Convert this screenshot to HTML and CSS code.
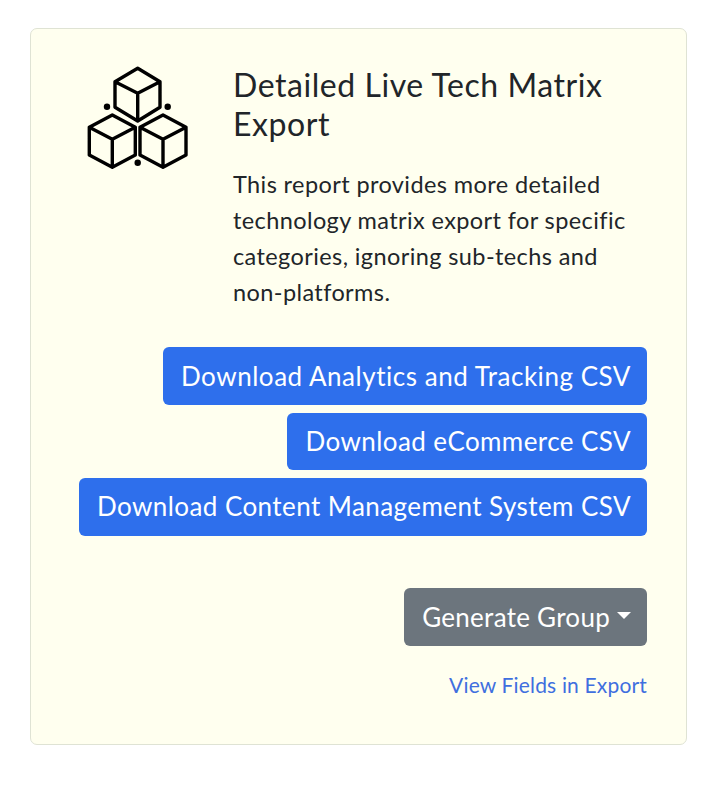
FILE: index.html
```html
<!DOCTYPE html>
<html lang="en">

<head>
  <meta charset="UTF-8">
  <title>Detailed Live Tech Matrix Export</title>
  <link rel="stylesheet" href="styles.css">
</head>

<body>
  <div class="card">
    <div class="intro">
      <div class="icon-col">
        <svg class="cubes" viewBox="0 0 104 104" fill="none" stroke="#000" stroke-width="3.4" stroke-linejoin="round">
          <path d="M51.7 2.3 74 15.7V41.3L51.7 55 29 41.3V15.7Z M29 15.7 51.7 27.3 74 15.7 M51.7 27.3V55" />
          <path d="M26.3 49 49.3 61.3V89L26.3 101.3 3.3 89V61.3Z M3.3 61.3 26.3 73.3 49.3 61.3 M26.3 73.3V101.3" />
          <path d="M77 49 100 61.3V89L77 101.3 54 89V61.3Z M54 61.3 77 73.3 100 61.3 M77 73.3V101.3" />
          <circle cx="21" cy="40.7" r="3.2" fill="#000" stroke="none" />
          <circle cx="81.7" cy="40.7" r="3.2" fill="#000" stroke="none" />
          <circle cx="51.7" cy="96.7" r="3.2" fill="#000" stroke="none" />
        </svg>
      </div>
      <div class="text-col">
        <h3>Detailed Live Tech Matrix Export</h3>
        <p>This report provides more detailed technology matrix export for specific categories, ignoring sub-techs and non-platforms.</p>
      </div>
    </div>

    <div class="actions">
      <a class="btn btn-primary btn-first" href="#">Download Analytics and Tracking CSV</a>
      <a class="btn btn-primary btn-short" href="#">Download eCommerce CSV</a>
      <a class="btn btn-primary btn-long" href="#">Download Content Management System CSV</a>
    </div>

    <div class="group">
      <button class="btn btn-secondary dropdown-toggle">Generate Group</button>
    </div>

    <a class="fields-link" href="#">View Fields in Export</a>
  </div>
</body>

</html>
```

FILE: styles.css
```css
body {
  margin: 0;
  padding: 28px 31px 48px 30px;
  background-color: #fff;
  font-family: Lato, "Open Sans", sans-serif;
  color: #212529;
}

.card {
  box-sizing: border-box;
  height: 717px;
  padding: 36px 39px 0 49px;
  background-color: #ffffef;
  border: 1px solid #dfe3d4;
  border-radius: 7px;
  text-align: right;
}

.intro {
  display: flex;
  text-align: left;
}

.icon-col {
  width: 153px;
  flex-shrink: 0;
  padding-top: 1px;
  padding-left: 6px;
  box-sizing: border-box;
}

.cubes {
  display: block;
  width: 104px;
  height: 104px;
}

h3 {
  margin: 0 0 23px;
  font-size: 32px;
  font-weight: 400;
  line-height: 39px;
  letter-spacing: 0.55px;
}

p {
  margin: 0;
  font-size: 23.5px;
  line-height: 36px;
  letter-spacing: 0.4px;
}

.actions {
  display: flex;
  flex-direction: column;
  align-items: flex-end;
  gap: 8px;
  margin-top: 37px;
}

.btn {
  display: inline-block;
  box-sizing: border-box;
  height: 58px;
  padding: 0 15px 0 17px;
  font-family: inherit;
  font-size: 26px;
  line-height: 55px;
  letter-spacing: 0.5px;
  white-space: nowrap;
  color: #fff;
  text-decoration: none;
  border-radius: 6px;
  border: 1px solid transparent;
}

.btn-first {
  line-height: 56px;
  letter-spacing: 0.53px;
}

.btn-short {
  height: 57px;
  line-height: 54px;
  letter-spacing: 0.42px;
}

.btn-long {
  letter-spacing: 0.43px;
}

.btn-primary {
  background-color: #2e6fec;
}

.btn-secondary {
  background-color: #6c757d;
  letter-spacing: 0.27px;
}

.group {
  margin-top: 52px;
}

.dropdown-toggle::after {
  content: "";
  display: inline-block;
  margin-left: 7px;
  vertical-align: 8px;
  border-top: 7px solid #fff;
  border-left: 7px solid transparent;
  border-right: 7px solid transparent;
}

.fields-link {
  display: block;
  margin-top: 22px;
  font-size: 21px;
  line-height: 33px;
  letter-spacing: 0.17px;
  color: #3f6fdf;
  text-decoration: none;
}
```
